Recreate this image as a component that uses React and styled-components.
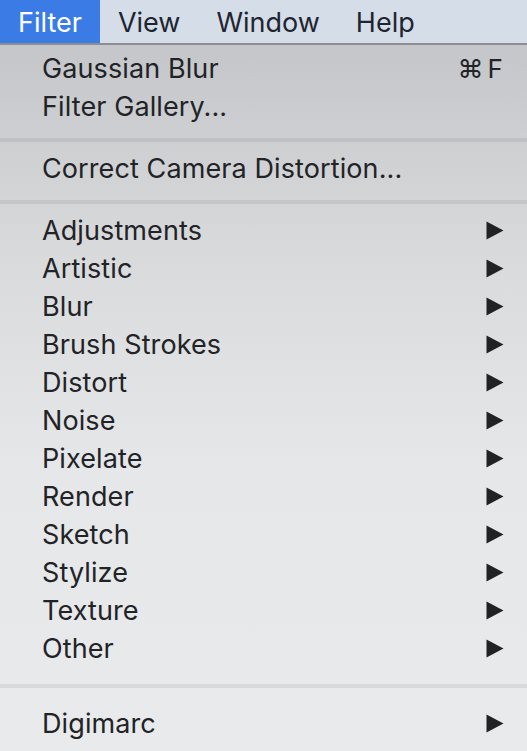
import React from "react"
import styled, { createGlobalStyle } from "styled-components"

const GlobalStyle = createGlobalStyle`
  html, body {
    margin: 0;
    padding: 0;
    background: #e9eaec;
  }
  body {
    font-family: Inter, "Noto Sans", "Liberation Sans", sans-serif;
    -webkit-font-smoothing: antialiased;
  }
`;

const menuBarItems = ["Filter", "View", "Window", "Help"];

const sections = [
  [
    { label: "Gaussian Blur", shortcut: "F" },
    { label: "Filter Gallery..." },
  ],
  [{ label: "Correct Camera Distortion..." }],
  [
    { label: "Adjustments", sub: true },
    { label: "Artistic", sub: true },
    { label: "Blur", sub: true },
    { label: "Brush Strokes", sub: true },
    { label: "Distort", sub: true },
    { label: "Noise", sub: true },
    { label: "Pixelate", sub: true },
    { label: "Render", sub: true },
    { label: "Sketch", sub: true },
    { label: "Stylize", sub: true },
    { label: "Texture", sub: true },
    { label: "Other", sub: true },
  ],
  [{ label: "Digimarc", sub: true }],
];

function SubArrow() {
  return (
    <Arrow viewBox="0 0 18 19" aria-hidden="true">
      <path d="M0.5 0.5 L17.5 9.5 L0.5 18.5 Z" fill="#212224" />
    </Arrow>
  );
}

export default function App() {
  return (
    <>
      <GlobalStyle />
      <Screen>
        <MenuBar>
          {menuBarItems.map((name, i) => (
            <BarItem key={name} active={i === 0}>
              {name}
            </BarItem>
          ))}
        </MenuBar>
        <Dropdown>
          {sections.map((items, s) => (
            <React.Fragment key={s}>
              {s > 0 && <Separator wide={s === sections.length - 1} />}
              {items.map((item) => (
                <Item key={item.label}>
                  <span>{item.label}</span>
                  {item.shortcut && (
                    <Shortcut>
                      <span className="cmd">⌘</span>
                      {item.shortcut}
                    </Shortcut>
                  )}
                  {item.sub && <SubArrow />}
                </Item>
              ))}
            </React.Fragment>
          ))}
        </Dropdown>
      </Screen>
    </>
  );
}

const Screen = styled.div`
  width: 527px;
  height: 751px;
  display: flex;
  flex-direction: column;
  overflow: hidden;
  background: #e9eaec;
`;

const MenuBar = styled.div`
  height: 43px;
  display: flex;
  align-items: stretch;
  background: #d4dde8;
  border-bottom: 2px solid #8c8e92;
  flex-shrink: 0;
`;

const BarItem = styled.div`
  display: flex;
  align-items: center;
  padding: 1px 18px 0;
  font-size: 27px;
  color: ${(p) => (p.active ? "#ffffff" : "#1e2530")};
  background: ${(p) => (p.active ? "#3a7be5" : "transparent")};
`;

const Dropdown = styled.div`
  flex: 1;
  display: flex;
  flex-direction: column;
  padding: 4px 0 0;
  background: linear-gradient(to bottom, #c4c6c9 0%, #d9dadc 30%, #e6e7e9 60%, #e9eaec 100%);
  border-bottom-left-radius: 6px;
  border-bottom-right-radius: 6px;
`;

const Item = styled.div`
  height: 38px;
  flex-shrink: 0;
  display: flex;
  align-items: center;
  justify-content: space-between;
  padding: 0 23px 0 42px;
  font-size: 27px;
  letter-spacing: 0.1px;
  color: #222326;
`;

const Shortcut = styled.span`
  font-size: 26px;
  padding-right: 1px;
  .cmd {
    margin-right: 4px;
  }
`;

const Separator = styled.div`
  height: ${(p) => (p.wide ? "37px" : "24px")};
  flex-shrink: 0;
  display: flex;
  flex-direction: column;
  padding-top: ${(p) => (p.wide ? "17px" : "13px")};
  box-sizing: border-box;
  &::before {
    content: "";
    height: 4px;
    background: rgba(0, 0, 0, 0.065);
  }
`;

const Arrow = styled.svg`
  width: 18px;
  height: 19px;
  flex-shrink: 0;
`;
